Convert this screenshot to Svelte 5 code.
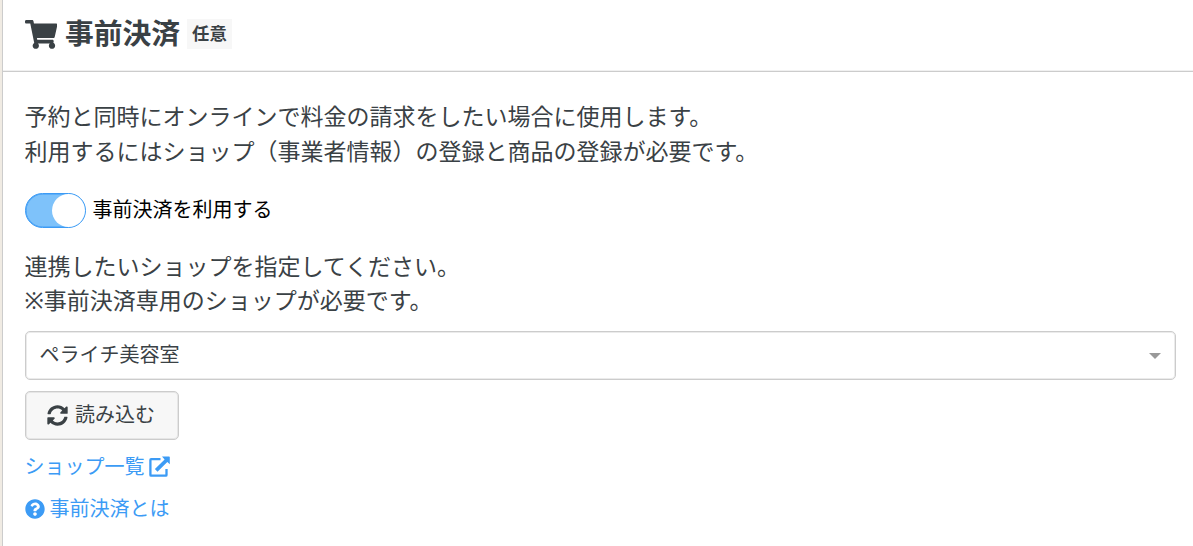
<script>
let enabled = true;
let shop = "ペライチ美容室";

let toggle = () => {
    enabled = !enabled;
}
</script>

<section class="panel">
    <header>
        <svg class="cart" viewBox="0 0 576 512"><path d="M528.12 301.319l47.273-208C578.806 78.301 567.391 64 551.99 64H159.208l-9.166-44.81C147.758 8.021 137.93 0 126.529 0H24C10.745 0 0 10.745 0 24v16c0 13.255 10.745 24 24 24h69.883l70.248 343.435C147.325 417.1 136 435.222 136 456c0 30.928 25.072 56 56 56s56-25.072 56-56c0-15.674-6.447-29.835-16.824-40h209.647C430.447 426.165 424 440.326 424 456c0 30.928 25.072 56 56 56s56-25.072 56-56c0-22.172-12.888-41.332-31.579-50.405l5.517-24.276c3.413-15.018-8.002-29.319-23.403-29.319H218.117l-6.545-32h293.145c11.206 0 20.92-7.754 23.403-18.681z" /></svg>
        <h2>事前決済</h2>
        <span class="badge">任意</span>
    </header>

    <div class="body">
        <p>予約と同時にオンラインで料金の請求をしたい場合に使用します。<br>利用するにはショップ（事業者情報）の登録と商品の登録が必要です。</p>

        <div class="switchRow">
            <button class="switch" class:on={enabled} on:click={toggle} aria-label="事前決済を利用する"><span class="knob"></span></button>
            <span>事前決済を利用する</span>
        </div>

        <p>連携したいショップを指定してください。<br>※事前決済専用のショップが必要です。</p>

        <div class="select">
            <span>{shop}</span>
            <span class="caret"></span>
        </div>

        <button class="load">
            <svg viewBox="0 0 512 512"><path d="M370.72 133.28C339.458 104.008 298.888 87.962 255.848 88c-77.458.068-144.328 53.178-162.791 126.85-1.344 5.363-6.122 9.15-11.651 9.15H24.103c-7.498 0-13.194-6.807-11.807-14.176C33.933 94.924 134.813 8 256 8c66.448 0 126.791 26.136 171.315 68.685L463.03 40.97C478.149 25.851 504 36.559 504 57.941V192c0 13.255-10.745 24-24 24H345.941c-21.382 0-32.09-25.851-16.971-40.971l41.75-41.749zM32 296h134.059c21.382 0 32.09 25.851 16.971 40.971l-41.75 41.75c31.262 29.273 71.835 45.319 114.876 45.28 77.418-.07 144.315-53.144 162.787-126.849 1.344-5.363 6.122-9.15 11.651-9.15h57.304c7.498 0 13.194 6.807 11.807 14.176C478.067 417.076 377.187 504 256 504c-66.448 0-126.791-26.136-171.315-68.685L48.97 471.03C33.851 486.149 8 475.441 8 454.059V320c0-13.255 10.745-24 24-24z" /></svg>
            <span>読み込む</span>
        </button>

        <a class="shopList" href="#shops">
            <span>ショップ一覧</span>
            <svg viewBox="0 0 21 21"><path d="M11.5 3.2H2.1a.7.7 0 0 0-.7.7v15a.7.7 0 0 0 .7.7h14.7a.7.7 0 0 0 .7-.7V13" fill="none" stroke="currentColor" stroke-width="2.3" /><path d="M13 .4H20a.8.8 0 0 1 .8.8V8.200l-2.500-2.300-9.800 9.800-2.600-2.600 9.700-9.700z" /></svg>
        </a>

        <a class="help" href="#help">
            <svg viewBox="0 0 512 512"><path d="M504 256c0 136.997-111.043 248-248 248S8 392.997 8 256C8 119.083 119.043 8 256 8s248 111.083 248 248zM262.655 90c-54.497 0-89.255 22.957-116.549 63.758-3.536 5.286-2.353 12.415 2.715 16.258l34.699 26.31c5.205 3.947 12.621 3.008 16.665-2.122 17.864-22.658 30.113-35.797 57.303-35.797 20.429 0 45.698 13.148 45.698 32.958 0 14.976-12.363 22.667-32.534 33.976C247.128 238.528 216 254.941 216 296v4c0 6.627 5.373 12 12 12h56c6.627 0 12-5.373 12-12v-1.333c0-28.462 83.186-29.647 83.186-106.667 0-58.002-60.165-102-116.531-102zM256 338c-25.365 0-46 20.635-46 46 0 25.364 20.635 46 46 46s46-20.636 46-46c0-25.365-20.635-46-46-46z" /></svg>
            <span>事前決済とは</span>
        </a>
    </div>
</section>

<style>
    :global(body) {
        background-color: #f0ebe3;
        overflow: hidden;
    }

    .panel {
        box-sizing: border-box;
        height: 546px;
        margin-left: 2px;
        border-left: 1px solid #ccc;
        background-color: white;
        color: #3a4145;
        font-family: "Noto Sans", "Noto Sans CJK JP", sans-serif;
        font-size: 23px;
        line-height: 34.5px;
    }

    svg {
        fill: currentColor;
        flex: none;
    }

    header {
        box-sizing: border-box;
        display: flex;
        align-items: center;
        height: 72px;
        padding: 0 0 4px 21.5px;
        border-bottom: 1px solid #ccc;
        box-shadow: 0 -1px 0 rgba(204, 204, 204, 0.3) inset;
    }

    .cart {
        width: 32.4px;
        height: 28.8px;
        margin-top: 2px;
    }

    h2 {
        margin: 0 7px 0 8px;
        font-size: 28.8px;
        font-weight: bold;
    }

    .badge {
        padding: 0 5px;
        background-color: #f7f7f7;
        font-size: 17.3px;
        font-weight: bold;
        line-height: 30px;
    }

    .body {
        display: flex;
        flex-direction: column;
        align-items: flex-start;
        padding: 27px 17px 0 21.5px;
    }

    p {
        margin: 0;
    }

    .switchRow {
        display: flex;
        align-items: center;
        gap: 7px;
        margin: 25px 0 20.500px;
        color: black;
        font-size: 20px;
    }

    .switch {
        box-sizing: border-box;
        display: flex;
        width: 61px;
        height: 35px;
        padding: 0;
        border: 1px solid #ccc;
        border-radius: 18px;
        background-color: #eee;
        cursor: pointer;
    }

    .switch.on {
        justify-content: flex-end;
        border-color: #3c9bf5;
        background-color: #7ec2fa;
        box-shadow: inset 0 0 0 0.5px #3c9bf5;
    }

    .knob {
        width: 33px;
        height: 33px;
        border-radius: 50%;
        background-color: white;
    }

    .select,
    .load {
        box-sizing: border-box;
        display: flex;
        align-items: center;
        border: 1px solid #ccc;
        border-radius: 5px;
        box-shadow: inset 0 0 0 1px rgba(204, 204, 204, 0.4);
        font-size: 20px;
    }

    .select {
        justify-content: space-between;
        align-self: stretch;
        height: 49px;
        margin-top: 13px;
        padding: 1px 14px 0;
    }

    .caret {
        border: 6px solid transparent;
        border-top: 6px solid #999;
        border-bottom: 0;
    }

    .load {
        gap: 7px;
        width: 154px;
        height: 49px;
        margin-top: 11.500px;
        padding: 0 0 0 21.500px;
        background-color: #f7f7f7;
        color: inherit;
        font-family: inherit;
        line-height: inherit;
        cursor: pointer;
    }

    .load svg {
        width: 21px;
        height: 21px;
    }

    a {
        display: flex;
        align-items: center;
        gap: 5px;
        color: #3c9bf5;
        font-size: 20px;
        line-height: 30px;
        text-decoration: none;
    }

    .shopList {
        gap: 4px;
        margin-top: 11.500px;
    }

    .shopList svg {
        width: 21px;
        height: 21px;
    }

    .help {
        margin-top: 12px;
    }

    .help svg {
        width: 20px;
        height: 20px;
    }
</style>
